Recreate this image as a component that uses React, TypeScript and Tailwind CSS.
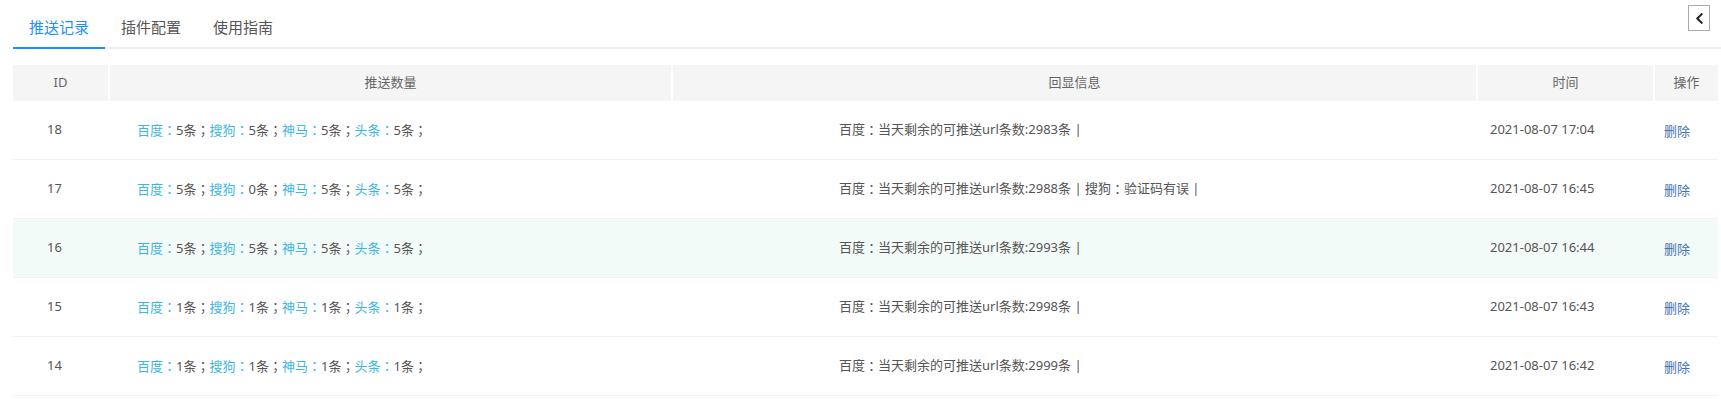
import { FaChevronLeft } from "react-icons/fa";

type Engine = { name: string; count: number };

interface PushRecord {
  id: number;
  engines: Engine[];
  message: string;
  time: string;
}

const records: PushRecord[] = [
  {
    id: 18,
    engines: [
      { name: "百度", count: 5 },
      { name: "搜狗", count: 5 },
      { name: "神马", count: 5 },
      { name: "头条", count: 5 },
    ],
    message: "百度：当天剩余的可推送url条数:2983条 |",
    time: "2021-08-07 17:04",
  },
  {
    id: 17,
    engines: [
      { name: "百度", count: 5 },
      { name: "搜狗", count: 0 },
      { name: "神马", count: 5 },
      { name: "头条", count: 5 },
    ],
    message: "百度：当天剩余的可推送url条数:2988条 | 搜狗：验证码有误 |",
    time: "2021-08-07 16:45",
  },
  {
    id: 16,
    engines: [
      { name: "百度", count: 5 },
      { name: "搜狗", count: 5 },
      { name: "神马", count: 5 },
      { name: "头条", count: 5 },
    ],
    message: "百度：当天剩余的可推送url条数:2993条 |",
    time: "2021-08-07 16:44",
  },
  {
    id: 15,
    engines: [
      { name: "百度", count: 1 },
      { name: "搜狗", count: 1 },
      { name: "神马", count: 1 },
      { name: "头条", count: 1 },
    ],
    message: "百度：当天剩余的可推送url条数:2998条 |",
    time: "2021-08-07 16:43",
  },
  {
    id: 14,
    engines: [
      { name: "百度", count: 1 },
      { name: "搜狗", count: 1 },
      { name: "神马", count: 1 },
      { name: "头条", count: 1 },
    ],
    message: "百度：当天剩余的可推送url条数:2999条 |",
    time: "2021-08-07 16:42",
  },
];

const tabs = ["推送记录", "插件配置", "使用指南"];
const headers = ["ID", "推送数量", "回显信息", "时间", "操作"];
const cols = "grid grid-cols-[95px_561px_803px_175px_63px] gap-x-[2px]";

// full-width colon / semicolon centred like the original font does
const Punct = ({ ch }: { ch: string }) => (
  <span className="font-['Noto_Sans_CJK_TC',sans-serif]">{ch}</span>
);

const withPunct = (text: string) =>
  text.split(/([：；])/).map((part, i) =>
    part === "：" || part === "；" ? <Punct key={i} ch={part} /> : <span key={i}>{part}</span>
  );

export default function App() {
  return (
    <div
      className="relative w-[1721px] h-[399px] bg-white text-[13px] text-[#555] overflow-hidden"
      style={{ fontFamily: '"Noto Sans", "Noto Sans CJK SC", sans-serif' }}
    >
      {/* Collapse toggle */}
      <button className="absolute top-[5px] right-[11px] w-[22px] h-[26px] border border-[#aaa] bg-white flex items-center justify-center text-[#222]">
        <FaChevronLeft className="text-[13px]" />
      </button>

      {/* Tabs */}
      <div className="ml-[13px] flex border-b-2 border-[#eee] h-[49px]">
        {tabs.map((tab, i) => (
          <div
            key={tab}
            className={`w-[92px] h-[49px] pt-[17px] text-center text-[15px] leading-[20px] -mb-[2px] ${
              i === 0 ? "text-[#1890ff] border-b-2 border-[#1890ff]" : "text-[#555]"
            }`}
          >
            {tab}
          </div>
        ))}
      </div>

      {/* Table */}
      <div className="ml-[13px] mt-[16px] w-[1705px]">
        <div className={`${cols} h-[36px]`}>
          {headers.map((h) => (
            <div key={h} className="bg-[#f5f5f5] flex items-center justify-center text-[#666]">
              {h}
            </div>
          ))}
        </div>

        {records.map((r) => (
          <div
            key={r.id}
            className={`${cols} h-[59px] border-b border-[#f2f2f2] ${r.id === 16 ? "bg-[#f3fbf8]" : ""}`}
          >
            <div className="flex items-center pl-[34px]">{r.id}</div>
            <div className="flex items-center pl-[27px] whitespace-nowrap">
              {r.engines.map((e) => (
                <span key={e.name}>
                  <span className="text-[#3eb7e0]">
                    {e.name}
                    <Punct ch="：" />
                  </span>
                  {e.count}条<Punct ch="；" />
                </span>
              ))}
            </div>
            <div className="flex items-center pl-[166px] whitespace-nowrap">{withPunct(r.message)}</div>
            <div className="flex items-center pl-[12px]">{r.time}</div>
            <div className="flex items-center pl-[9px] pt-[3px]">
              <a className="text-[#4573b6] cursor-pointer">删除</a>
            </div>
          </div>
        ))}
      </div>
    </div>
  );
}
